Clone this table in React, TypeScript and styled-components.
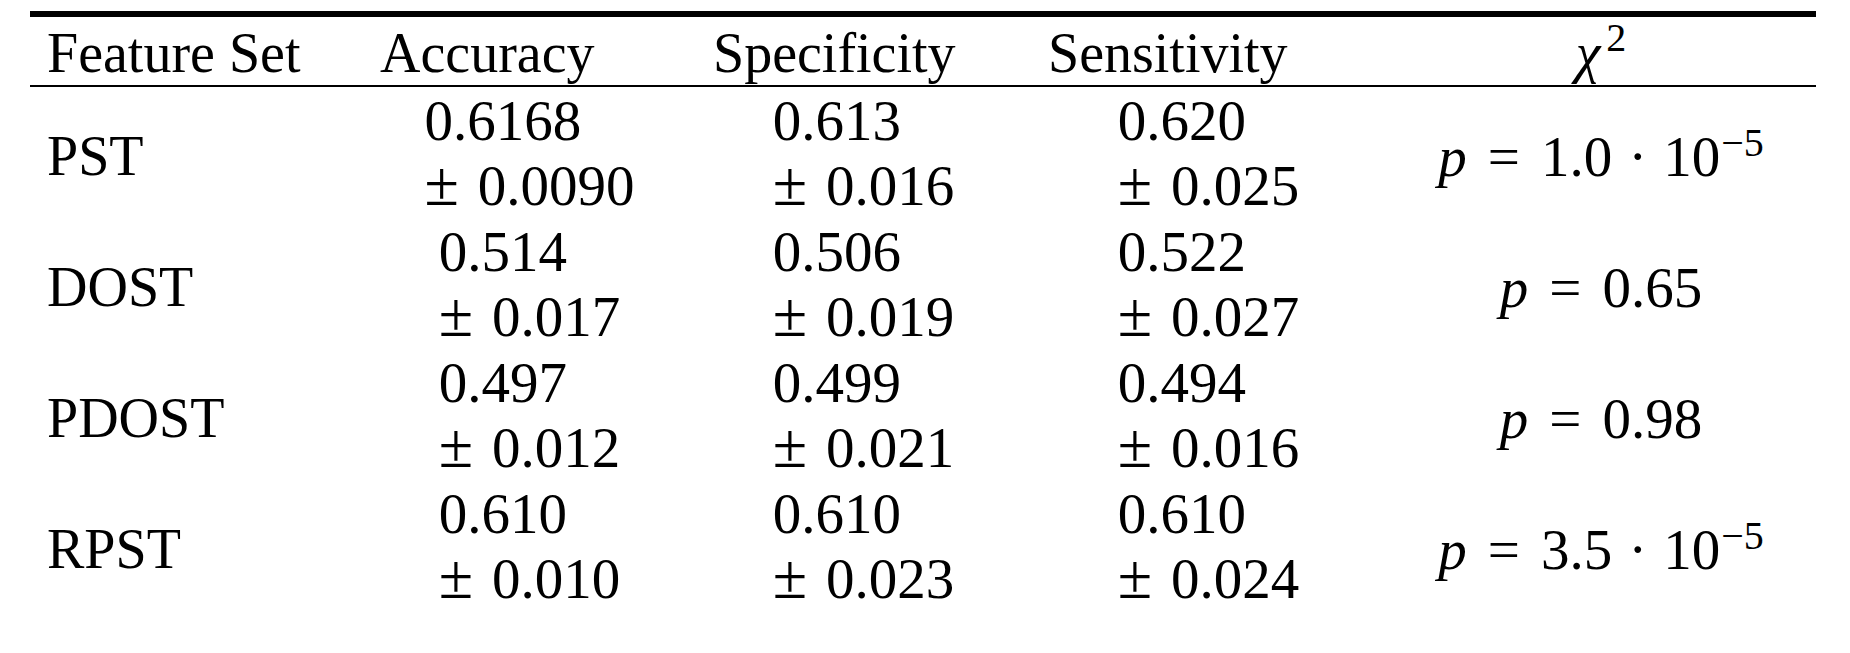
import styled, { createGlobalStyle } from "styled-components";

const GlobalStyle = createGlobalStyle`
	html, body {
		margin: 0;
		padding: 0;
		background: #ffffff;
	}
	body {
		font-family: "Liberation Serif", "Times New Roman", serif;
		color: #000000;
	}
`;

const columns = "333px 333px 335px 355px 430px";

const Table = styled.div`
	margin: 11px 0 0 30px;
	width: 1786px;
`;

const HeadRow = styled.div`
	display: grid;
	grid-template-columns: ${columns};
	border-top: 6px solid #000;
	border-bottom: 2px solid #000;
`;

const HeadCell = styled.div<{ $center?: boolean }>`
	padding: 4px 0 0 ${(p) => (p.$center ? "0" : "17px")};
	font-size: 56px;
	line-height: 64px;
	white-space: nowrap;
	text-align: ${(p) => (p.$center ? "center" : "left")};
`;

const Chi = styled.span`
	font-style: italic;
`;

const Sup = styled.sup<{ $size: number; $raise: number; $gap?: number }>`
	font-size: ${(p) => p.$size}px;
	line-height: 0;
	vertical-align: ${(p) => p.$raise}px;
	margin-left: ${(p) => p.$gap ?? 2}px;
`;

const BodyRow = styled.div`
	display: grid;
	grid-template-columns: ${columns};
	padding-top: 1px;
`;

const LabelCell = styled.div`
	display: flex;
	align-items: center;
	padding: 6px 0 0 17px;
	font-size: 56px;
	line-height: 65px;
`;

const ValueCell = styled.div`
	display: flex;
	justify-content: center;
`;

const Stack = styled.div`
	display: flex;
	flex-direction: column;
	align-items: flex-start;
	font-size: 57px;
	line-height: 65px;
	white-space: nowrap;
`;

const Pm = styled.span`
	font-size: 1.1em;
	line-height: 0;
	margin-right: 0.3em;
`;

const PCell = styled.div`
	display: flex;
	align-items: center;
	justify-content: center;
	padding-top: 6px;
	font-size: 57px;
	line-height: 65px;
	white-space: nowrap;
`;

const Expr = styled.span`
	display: inline-block;
`;

const Var = styled.span`
	font-style: italic;
`;

const Op = styled.span<{ $gap: number }>`
	margin: 0 ${(p) => p.$gap}px;
`;

type PValue = { value?: string; mant?: string; exp?: string };

type Row = {
	name: string;
	acc: [string, string];
	spec: [string, string];
	sens: [string, string];
	p: PValue;
};

const rows: Row[] = [
	{ name: "PST", acc: ["0.6168", "0.0090"], spec: ["0.613", "0.016"], sens: ["0.620", "0.025"], p: { mant: "1.0", exp: "\u22125" } },
	{ name: "DOST", acc: ["0.514", "0.017"], spec: ["0.506", "0.019"], sens: ["0.522", "0.027"], p: { value: "0.65" } },
	{ name: "PDOST", acc: ["0.497", "0.012"], spec: ["0.499", "0.021"], sens: ["0.494", "0.016"], p: { value: "0.98" } },
	{ name: "RPST", acc: ["0.610", "0.010"], spec: ["0.610", "0.023"], sens: ["0.610", "0.024"], p: { mant: "3.5", exp: "\u22125" } },
];

const Value = ({ v }: { v: [string, string] }) => (
	<ValueCell>
		<Stack>
			<span>{v[0]}</span>
			<span>
				<Pm>±</Pm>
				{v[1]}
			</span>
		</Stack>
	</ValueCell>
);

const PVal = ({ p }: { p: PValue }) => (
	<PCell>
		<Expr>
			<Var>p</Var>
			<Op $gap={21}>=</Op>
			{p.value ? (
				p.value
			) : (
				<>
					{p.mant}
					<Op $gap={16}>·</Op>
					10
					<Sup $size={40} $raise={20} $gap={1}>
						{p.exp}
					</Sup>
				</>
			)}
		</Expr>
	</PCell>
);

export default function App() {
	return (
		<>
			<GlobalStyle />
			<Table>
				<HeadRow>
					<HeadCell>Feature Set</HeadCell>
					<HeadCell>Accuracy</HeadCell>
					<HeadCell>Specificity</HeadCell>
					<HeadCell>Sensitivity</HeadCell>
					<HeadCell $center>
						<Chi>χ</Chi>
						<Sup $size={40} $raise={21} $gap={6}>
							2
						</Sup>
					</HeadCell>
				</HeadRow>
				{rows.map((r) => (
					<BodyRow key={r.name}>
						<LabelCell>{r.name}</LabelCell>
						<Value v={r.acc} />
						<Value v={r.spec} />
						<Value v={r.sens} />
						<PVal p={r.p} />
					</BodyRow>
				))}
			</Table>
		</>
	);
}
